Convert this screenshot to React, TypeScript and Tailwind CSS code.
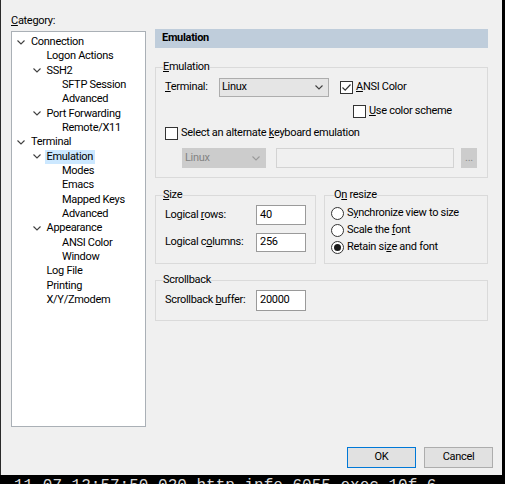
import React from "react";

const font = { fontFamily: "Roboto, 'Noto Sans', sans-serif" };

type Node = { label: string; level: number; open?: boolean; selected?: boolean };

const tree: Node[] = [
  { label: "Connection", level: 0, open: true },
  { label: "Logon Actions", level: 1 },
  { label: "SSH2", level: 1, open: true },
  { label: "SFTP Session", level: 2 },
  { label: "Advanced", level: 2 },
  { label: "Port Forwarding", level: 1, open: true },
  { label: "Remote/X11", level: 2 },
  { label: "Terminal", level: 0, open: true },
  { label: "Emulation", level: 1, open: true, selected: true },
  { label: "Modes", level: 2 },
  { label: "Emacs", level: 2 },
  { label: "Mapped Keys", level: 2 },
  { label: "Advanced", level: 2 },
  { label: "Appearance", level: 1, open: true },
  { label: "ANSI Color", level: 2 },
  { label: "Window", level: 2 },
  { label: "Log File", level: 1 },
  { label: "Printing", level: 1 },
  { label: "X/Y/Zmodem", level: 1 },
];

const indent = ["pl-[4px]", "pl-[19.5px]", "pl-[35px]"];

function Chevron({ light }: { light?: boolean }) {
  return (
    <svg width="8" height="5" viewBox="0 0 8 5" className="block">
      <path d="M0.5 0.5 L4 4 L7.5 0.5" fill="none" stroke={light ? "#9a9a9a" : "#404040"} strokeWidth="1.1" />
    </svg>
  );
}

function Check({ checked }: { checked?: boolean }) {
  return (
    <div className="flex h-[13px] w-[13px] shrink-0 items-center justify-center border border-[#333333] bg-white">
      {checked && (
        <svg width="11" height="11" viewBox="0 0 11 11">
          <path d="M1.5 5.5 L4.2 8.2 L9.5 2.5" fill="none" stroke="#333333" strokeWidth="1.2" />
        </svg>
      )}
    </div>
  );
}

function Radio({ on }: { on?: boolean }) {
  return (
    <div className="flex h-[13px] w-[13px] shrink-0 items-center justify-center rounded-full border border-[#333333] bg-white">
      {on && <div className="h-[7px] w-[7px] rounded-full bg-[#1a1a1a]" />}
    </div>
  );
}

function Group({
  label,
  className,
  legend = "ml-[7px]",
  children,
}: {
  label: React.ReactNode;
  className: string;
  legend?: string;
  children: React.ReactNode;
}) {
  return (
    <fieldset className={`border border-[#dadada] ${className}`}>
      <legend className={`${legend} leading-[14px]`}>{label}</legend>
      {children}
    </fieldset>
  );
}

export default function App() {
  return (
    <div className="relative h-[484px] w-[505px] overflow-hidden bg-black text-[11px] tracking-[-0.3px] text-black" style={font}>
      <div className="flex h-[475px] w-[502px] flex-col border-l border-[#2a2a2a] bg-[#f0f0f0]">
        <div className="flex">
          {/* Category tree */}
          <div className="flex w-[154px] flex-col pl-[10px] pt-[14px]">
            <div className="h-[17px] leading-[14px]">
              <u>C</u>ategory:
            </div>
            <div className="h-[396px] w-[135px] border border-[#aab0b6] bg-white pt-[3px]">
              {tree.map((n, i) => (
                <div key={i} className={`flex h-[14.33px] items-center ${indent[n.level]}`}>
                  <div className="flex w-[15px] shrink-0 items-center pl-[1px]">{n.open && <Chevron />}</div>
                  <span className={`-ml-[2px] px-[2px] leading-[14px] ${n.selected ? "bg-[#cce8ff]" : ""}`}>{n.label}</span>
                </div>
              ))}
            </div>
          </div>

          {/* Settings */}
          <div className="flex w-[333px] flex-col pt-[29px]">
            <div className="flex h-[19px] items-center bg-[#bfcddb] pl-[7px] font-bold">Emulation</div>

            <Group label={<><u>E</u>mulation</>} className="mt-[12px] pb-[9px]">
              <div className="px-[9px]">
                <div className="mt-[4px] flex h-[19px] items-center">
                  <span className="w-[54px]">
                    <u>T</u>erminal:
                  </span>
                  <div className="flex h-[19px] w-[110px] items-center justify-between border border-[#adadad] bg-[#e5e5e5] pl-[2px] pr-[5px]">
                    <span>Linux</span>
                    <Chevron />
                  </div>
                  <div className="ml-[11px] flex items-center gap-[3px]">
                    <Check checked />
                    <span>
                      <u>A</u>NSI Color
                    </span>
                  </div>
                </div>
                <div className="mt-[8px] flex h-[13px] items-center gap-[3px] pl-[188px]">
                  <Check />
                  <span>
                    <u>U</u>se color scheme
                  </span>
                </div>
                <div className="mt-[9px] flex h-[13px] items-center gap-[3px]">
                  <Check />
                  <span>
                    Select an alternate <u>k</u>eyboard emulation
                  </span>
                </div>
                <div className="mt-[8px] flex h-[20px] items-center pl-[17px]">
                  <div className="flex h-[20px] w-[84px] items-center justify-between bg-[#cccccc] pl-[3px] pr-[6px] text-[#838383]">
                    <span>Linux</span>
                    <Chevron light />
                  </div>
                  <div className="ml-[10px] h-[20px] w-[178px] border border-[#d3d3d3] bg-[#f0f0f0]" />
                  <div className="ml-[7px] flex h-[20px] w-[16px] items-center justify-center bg-[#cccccc] text-[#8a8a8a]">
                    ...
                  </div>
                </div>
              </div>
            </Group>

            <div className="mt-[10px] flex items-stretch gap-[8px]">
              <Group label={<><u>S</u>ize</>} className="w-[161px] pb-[11px]">
                <div className="px-[9px]">
                  <div className="mt-[3px] flex items-center">
                    <span className="w-[91px]">
                      Logical <u>r</u>ows:
                    </span>
                    <div className="flex h-[20px] w-[50px] items-center border border-[#9a9a9a] bg-white pl-[3px]">40</div>
                  </div>
                  <div className="mt-[8px] flex items-center">
                    <span className="w-[91px]">
                      Logical c<u>o</u>lumns:
                    </span>
                    <div className="flex h-[19px] w-[50px] items-center border border-[#9a9a9a] bg-white pl-[3px]">256</div>
                  </div>
                </div>
              </Group>
              <Group label={<>O<u>n</u> resize</>} legend="ml-[9px]" className="w-[164px]">
                <div className="mt-[5px] flex flex-col gap-[4px] px-[6px]">
                  <div className="flex h-[13px] items-center gap-[3px]">
                    <Radio />
                    <span>
                      S<u>y</u>nchronize view to size
                    </span>
                  </div>
                  <div className="flex h-[13px] items-center gap-[3px]">
                    <Radio />
                    <span>
                      Scale the <u>f</u>ont
                    </span>
                  </div>
                  <div className="flex h-[13px] items-center gap-[3px]">
                    <Radio on />
                    <span>
                      Retain si<u>z</u>e and font
                    </span>
                  </div>
                </div>
              </Group>
            </div>

            <Group label="Scrollback" className="mt-[9px] pb-[9px]">
              <div className="mt-[3px] flex items-center px-[9px]">
                <span className="w-[91px]">
                  Scrollback <u>b</u>uffer:
                </span>
                <div className="flex h-[21px] w-[50px] items-center border border-[#9a9a9a] bg-white pl-[3px]">20000</div>
              </div>
            </Group>
          </div>
        </div>

        <div className="mt-auto flex justify-end gap-[8px] pb-[7px] pr-[9px]">
          <button className="h-[21px] w-[69px] border border-[#0078d7] bg-[#e1e1e1]">OK</button>
          <button className="h-[21px] w-[69px] border border-[#adadad] bg-[#e1e1e1]">Cancel</button>
        </div>
      </div>

      <div
        className="absolute left-[14px] top-[478px] whitespace-pre text-[16px] leading-[16px] tracking-normal text-[#d8d8d8]"
        style={{ fontFamily: "'Liberation Mono', monospace" }}
      >
        11 07 12:57:50.020 http info 6055 exec 10f 6
      </div>
    </div>
  );
}
